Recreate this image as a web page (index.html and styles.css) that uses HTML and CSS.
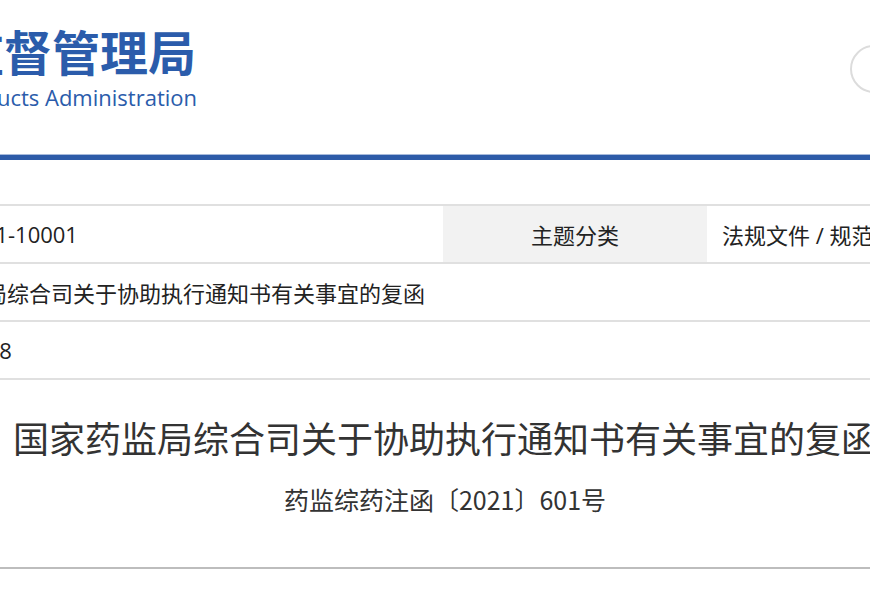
FILE: index.html
```html
<!DOCTYPE html>
<html lang="zh-CN">
<head>
    <meta charset="UTF-8">
    <title>国家药监局综合司关于协助执行通知书有关事宜的复函</title>
    <link rel="stylesheet" href="styles.css">
</head>
<body>
    <!-- Header -->
    <div class="header">
        <div class="logo">
            <div class="logo-cn">国家药品监督管理局</div>
            <div class="logo-en">National Medical Products Administration</div>
        </div>
        <div class="search-btn"></div>
    </div>
    <div class="header-line"></div>

    <div class="page">
        <!-- Info table -->
        <table class="info-table">
            <tr>
                <td class="label col-label">索引号</td>
                <td class="value col-value">FGWJ-2021-10001</td>
                <td class="label col-label2">主题分类</td>
                <td class="value">法规文件 / 规范性文件</td>
            </tr>
            <tr>
                <td class="label">标题</td>
                <td class="value" colspan="3">国家药监局综合司关于协助执行通知书有关事宜的复函</td>
            </tr>
            <tr>
                <td class="label">发布日期</td>
                <td class="value" colspan="3">2021-06-18</td>
            </tr>
        </table>

        <!-- Article head -->
        <div class="article-head">
            <h1 class="article-title">国家药监局综合司关于协助执行通知书有关事宜的复函</h1>
            <p class="doc-no">药监综药注函〔2021〕601号</p>
        </div>
    </div>
    <div class="divider"></div>
</body>
</html>
```

FILE: styles.css
```css
* { margin: 0; padding: 0; box-sizing: border-box; }
html, body { overflow: hidden; }
body { font-family: "Noto Sans CJK SC", "Liberation Sans", sans-serif; background: #fff; color: #222; width: 870px; }

/* Header */
.header { display: flex; justify-content: space-between; align-items: flex-start; height: 154px; }
.logo { margin-left: -236px; text-align: right; color: #2b5cab; }
.logo-cn { font-size: 48px; font-weight: bold; line-height: 52px; margin-top: 24px; }
.logo-en { font-family: "Open Sans", "Liberation Sans", sans-serif; font-size: 22px; line-height: 26px; margin-top: 8px; margin-right: -1px; }
.search-btn { width: 48px; height: 48px; border: 2px solid #dcdcdc; border-radius: 50%; margin-top: 45px; margin-right: -28px; }
.header-line { border-top: 1px solid #a7badb; height: 6px; background: #2d5ba8; }

/* Page */
.page { width: 1490px; margin-left: -300px; }

/* Info table */
.info-table { width: 100%; border-collapse: collapse; margin-top: 44px; font-family: "Open Sans", "Noto Sans CJK SC", sans-serif; font-size: 22px; table-layout: fixed; }
.info-table tr { border-top: 2px solid #e0e0e0; border-bottom: 2px solid #e0e0e0; }
.info-table td { height: 58px; padding: 0 0 0 15px; vertical-align: middle; white-space: nowrap; overflow: hidden; }
.info-table td.label { background: #f2f2f2; text-align: center; padding: 0; }
.col-label { width: 182px; }
.col-value { width: 561px; }
.col-label2 { width: 264px; }
.info-table td.value { background: #fff; color: #222; }

/* Article head */
.article-head { text-align: center; padding-top: 32px; }
.article-title { font-size: 36px; font-weight: normal; line-height: 50px; color: #333; white-space: nowrap; }
.doc-no { font-size: 25px; line-height: 36px; margin-top: 19px; color: #333; }

.divider { border-top: 2px solid #bdbdbd; margin-top: 50px; }
```
